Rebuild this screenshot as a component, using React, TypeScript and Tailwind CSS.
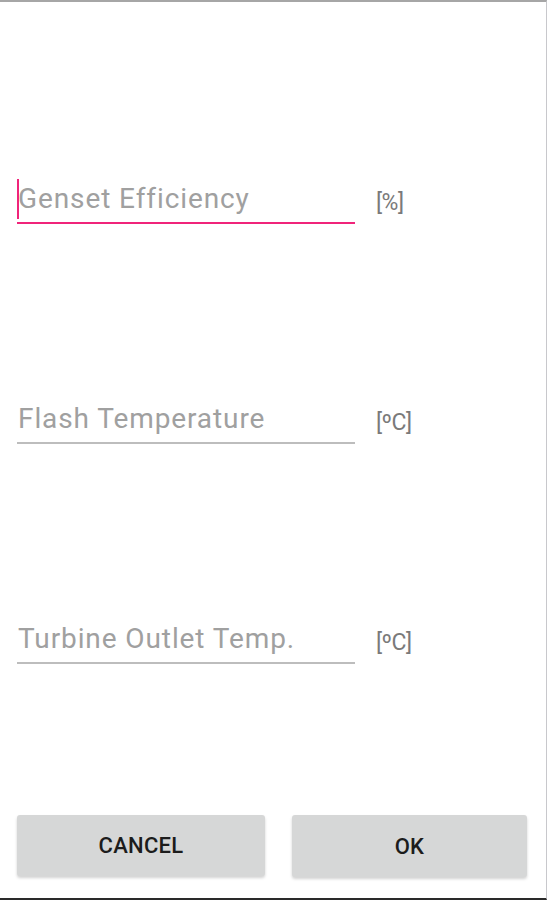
import React from "react";

interface FieldProps {
  hint: string;
  unit: string;
  focused?: boolean;
}

function Field({ hint, unit, focused }: FieldProps) {
  return (
    <div className="flex items-start">
      <div
        className={`relative w-[338px] pb-[7px] border-b-2 ${
          focused ? "border-[#f0247a]" : "border-[#bdbdbd]"
        }`}
      >
        {focused && (
          <span className="absolute left-0 top-[-4px] h-[40px] w-[2px] bg-[#f0247a]" />
        )}
        <div className="pl-[1px] text-[28px] leading-[32px] text-[#a0a0a0] tracking-[0.9px]">
          {hint}
        </div>
      </div>
      <div className="ml-[21px] mt-[4px] text-[23px] leading-[32px] text-[#7a7a7a] tracking-[-0.5px]">
        {unit}
      </div>
    </div>
  );
}

export default function App() {
  return (
    <div
      className="w-[547px] h-[900px] bg-white flex flex-col border-t-2 border-t-[#a6a6a6] border-r border-r-[#c8c8cc] border-b-2 border-b-[#2a2a2a] overflow-hidden"
      style={{ fontFamily: "Roboto, 'Noto Sans', sans-serif" }}
    >
      <div className="flex flex-col gap-[179px] pl-[17px] pt-[181px]">
        <Field hint="Genset Efficiency" unit="[%]" focused />
        <Field hint="Flash Temperature" unit="[ºC]" />
        <Field hint="Turbine Outlet Temp." unit="[ºC]" />
      </div>

      <div className="mt-auto mb-[21px] flex gap-[27px] pl-[17px] pr-[19px]">
        <button className="w-[248px] h-[61px] rounded-[3px] bg-[#d6d7d7] shadow-[0_2px_3px_rgba(0,0,0,0.18)] text-[22px] font-medium text-[#1c1c1c] tracking-[0.3px]">
          CANCEL
        </button>
        <button className="flex-1 h-[62px] rounded-[3px] bg-[#d6d7d7] shadow-[0_2px_3px_rgba(0,0,0,0.18)] text-[22px] font-medium text-[#1c1c1c] tracking-[0.3px]">
          OK
        </button>
      </div>
    </div>
  );
}
